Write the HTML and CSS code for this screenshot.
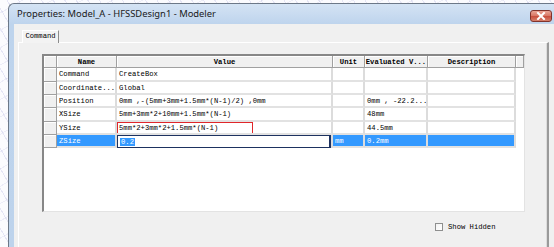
FILE: index.html
```html
<!DOCTYPE html>
<html>
<head>
<meta charset="utf-8">
<link rel="stylesheet" href="styles.css">
</head>
<body>
<div class="window">
  <div class="titlebar">
    <span class="title">Properties: Model_A - HFSSDesign1 - Modeler</span>
    <div class="close">
      <svg width="10" height="8" viewBox="0 0 10 8"><path d="M2 1 L8 7 M8 1 L2 7" stroke="#fff" stroke-width="2" stroke-linecap="square"/></svg>
    </div>
  </div>
  <div class="client">
    <div class="tabs"><div class="tab">Command</div></div>
    <div class="panel">
      <div class="grid">
        <div class="rh hd"></div><div class="hc">Name</div><div class="hc">Value</div><div class="hc">Unit</div><div class="hc">Evaluated V...</div><div class="hc">Description</div><div class="hc"></div>

        <div class="rh"></div><div class="c">Command</div><div class="c">CreateBox</div><div class="c"></div><div class="c"></div><div class="c"></div><div class="x"></div>

        <div class="rh"></div><div class="c">Coordinate...</div><div class="c">Global</div><div class="c"></div><div class="c"></div><div class="c"></div><div class="x"></div>

        <div class="rh"></div><div class="c">Position</div><div class="c">0mm ,-(5mm+3mm+1.5mm*(N-1)/2) ,0mm</div><div class="c"></div><div class="c">0mm , -22.2...</div><div class="c"></div><div class="x"></div>

        <div class="rh"></div><div class="c">XSize</div><div class="c">5mm+3mm*2+10mm+1.5mm*(N-1)</div><div class="c"></div><div class="c">48mm</div><div class="c"></div><div class="x"></div>

        <div class="rh"></div><div class="c">YSize</div><div class="c mark">5mm*2+3mm*2+1.5mm*(N-1)<span class="redbox"></span></div><div class="c"></div><div class="c">44.5mm</div><div class="c"></div><div class="x"></div>

        <div class="rh"></div><div class="c sel">ZSize</div><div class="c edit"><span class="edbox"><span class="hl">0.2</span></span></div><div class="c sel">mm</div><div class="c sel">0.2mm</div><div class="c sel"></div><div class="x"></div>
      </div>
      <div class="options">
        <span class="check"></span><span class="lbl">Show Hidden</span>
      </div>
    </div>
  </div>
</div>
</body>
</html>
```
FILE: styles.css
```css
html, body {
  margin: 0;
  padding: 0;
}
body {
  width: 554px;
  height: 247px;
  overflow: hidden;
  background-color: #fbfbfe;
  background-image:
    repeating-linear-gradient(60deg, transparent 0 9px, rgba(180,180,225,0.3) 9px 10px),
    repeating-linear-gradient(-30deg, transparent 0 14px, rgba(180,180,225,0.2) 14px 15px);
  padding: 3px 0 0 8px;
  box-sizing: border-box;
}
.window {
  width: 546px;
  margin-right: -14px;
  height: 244px;
  box-sizing: border-box;
  border: 1px solid #6c7888;
  border-bottom: none;
  border-right: none;
  border-radius: 6px 0 0 0;
  background: linear-gradient(180deg, #d4e3f4 0px, #bed4ed 20px, #bdd3ec 100%);
  padding: 0 0 0 5px;
  display: flex;
  flex-direction: column;
}
.titlebar {
  height: 20px;
  display: flex;
  align-items: flex-start;
  flex-shrink: 0;
}
.title {
  font-family: "Noto Sans", "Open Sans", sans-serif;
  font-size: 9.4px;
  color: #1a1a1a;
  padding-left: 3px;
  margin-top: 4px;
  line-height: 12px;
}
.close {
  margin-left: auto;
  margin-right: 2px;
  margin-top: 6px;
  width: 22px;
  height: 12px;
  box-sizing: border-box;
  border: 1px solid #80332c;
  border-radius: 3px;
  background: linear-gradient(180deg, #eaa596 0%, #d97a68 45%, #c9503f 55%, #d6806b 100%);
  display: flex;
  align-items: center;
  justify-content: center;
}
.client {
  flex: 1;
  min-height: 0;
  background: #f0f0f0;
  padding-top: 6px;
  padding-left: 4px;
  display: flex;
  flex-direction: column;
}
.tabs {
  display: flex;
  padding-left: 4px;
  height: 12px;
  flex-shrink: 0;
  position: relative;
  z-index: 1;
}
.tab {
  width: 37px;
  height: 13px;
  box-sizing: border-box;
  border-top: 1px solid #ffffff;
  border-left: 1px solid #ffffff;
  border-right: 1px solid #8c8c8c;
  background: #f3f3f3;
  font-family: "Liberation Mono", monospace;
  font-size: 7.2px;
  line-height: 11px;
  text-align: center;
  color: #000;
}
.panel {
  flex: 1;
  width: 531px;
  box-sizing: border-box;
  border-top: 1px solid #ffffff;
  border-left: 1px solid #ffffff;
  border-right: 2px solid #9a9a9a;
  box-shadow: inset -1px 0 0 #dcdcdc;
  padding: 11px 0 0 23px;
}
.grid {
  width: 483px;
  height: 158px;
  box-sizing: border-box;
  background: #ffffff;
  border-top: 2px solid #878787;
  border-left: 2px solid #878787;
  border-right: 1px solid #e3e3e3;
  border-bottom: 1px solid #e3e3e3;
  display: grid;
  grid-template-columns: 13px 60px 216px 32px 63px 88px 8px;
  grid-template-rows: 12px 14px 13px 13px 14px 13px 13px;
  align-content: start;
  font-family: "Liberation Mono", monospace;
  font-size: 7.2px;
  color: #000;
}
.grid > div {
  box-sizing: border-box;
  white-space: nowrap;
  overflow: hidden;
  display: flex;
  align-items: center;
}
.hc {
  background: #f0f0f0;
  border-right: 1px solid #a0a0a0;
  border-bottom: 1px solid #a0a0a0;
  box-shadow: inset 1px 1px 0 #ffffff;
  justify-content: center;
  font-weight: bold;
}
.rh {
  background: #f0f0f0;
  border-right: 1px solid #a0a0a0;
  border-bottom: 1px solid #a0a0a0;
  box-shadow: inset 1px 1px 0 #ffffff;
}
.c {
  border-right: 2px solid #dcdcdc;
  border-bottom: 2px solid #e2e2e2;
  padding-left: 2px;
}
.x {
  background: #ffffff;
}
.sel {
  background: #3399ff;
  color: #ffffff;
}
.mark {
  position: relative;
}
.redbox {
  position: absolute;
  left: 0;
  top: 0;
  width: 136px;
  height: 12px;
  box-sizing: border-box;
  border: 1.5px solid #e0262a;
}
.grid > .edit {
  padding: 0;
  border-bottom: none;
}
.edbox {
  width: 100%;
  height: 100%;
  box-sizing: border-box;
  border: 1px solid #1d3260;
  border-right-width: 2px;
  background: #ffffff;
  display: flex;
  align-items: center;
  padding-left: 2px;
}
.hl {
  background: #3399ff;
  color: #ffffff;
  padding: 0 1px;
}
.options {
  margin-top: 11px;
  padding-left: 393px;
  display: flex;
  align-items: center;
  gap: 5px;
  font-family: "Liberation Mono", monospace;
  font-size: 7.2px;
  color: #000;
}
.check {
  width: 8px;
  height: 8px;
  box-sizing: border-box;
  border: 1px solid #8e8f8f;
  background: linear-gradient(135deg, #f2f2f2, #ffffff);
}
```
